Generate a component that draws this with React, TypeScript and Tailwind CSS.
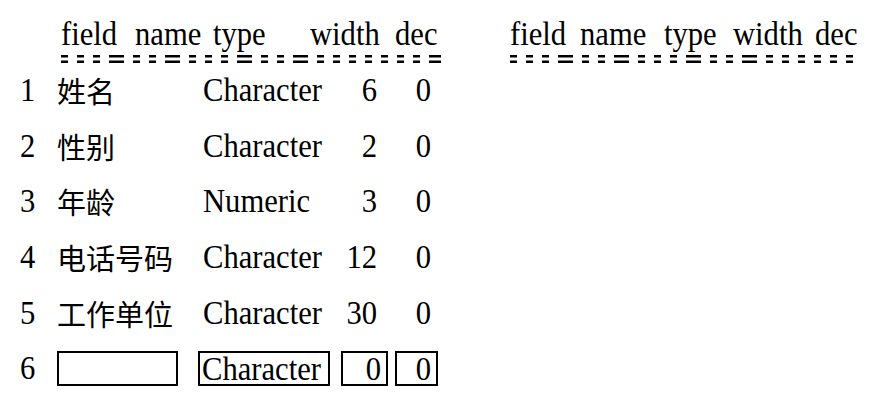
import React from "react";

const serif = { fontFamily: '"Liberation Serif", "Noto Sans CJK SC", serif' };
const cjk = { fontFamily: '"Noto Sans CJK SC", sans-serif' };

function Dashes({ width }: { width: number }) {
  const items: { x: number; w: number }[] = [];
  const pattern = [1, 1, 1, 2, 1, 1, 2, 1, 1, 1, 2, 1, 1, 2, 1, 1, 1, 1];
  let x = 0;
  let i = 0;
  while (x < width - 6) {
    const p = pattern[i % pattern.length];
    const w = p === 2 ? 15 : 7;
    items.push({ x, w: Math.min(w, width - x) });
    x += w + 9;
    i++;
  }
  return (
    <svg width={width} height={8} className="block">
      {items.map((it, k) => (
        <g key={k} fill="#000">
          <rect x={it.x} y={0} width={it.w} height={2.5} />
          <rect x={it.x} y={5.5} width={it.w} height={2.5} />
        </g>
      ))}
    </svg>
  );
}

function T({ children, right }: { children: React.ReactNode; right?: boolean }) {
  return (
    <span
      className={
        right
          ? "inline-block scale-x-[0.9] origin-right"
          : "inline-block scale-x-[0.9] origin-left"
      }
    >
      {children}
    </span>
  );
}

type Row = { n: string; name: string; type: string; w: string; d: string };
const rows: Row[] = [
  { n: "1", name: "姓名", type: "Character", w: "6", d: "0" },
  { n: "2", name: "性别", type: "Character", w: "2", d: "0" },
  { n: "3", name: "年龄", type: "Numeric", w: "3", d: "0" },
  { n: "4", name: "电话号码", type: "Character", w: "12", d: "0" },
  { n: "5", name: "工作单位", type: "Character", w: "30", d: "0" },
];

export default function App() {
  return (
    <div
      className="w-[891px] h-[413px] bg-white text-black flex overflow-hidden"
      style={serif}
    >
      {/* left table */}
      <div className="w-[508px] pt-[16px] pl-[20px]">
        <div className="flex pl-[41px] text-[34px] leading-[36px] h-[36px] whitespace-nowrap">
          <span className="w-[74px]"><T>field</T></span>
          <span className="w-[78px]"><T>name</T></span>
          <span className="w-[97px]"><T>type</T></span>
          <span className="w-[85px]"><T>width</T></span>
          <span><T>dec</T></span>
        </div>
        <div className="pl-[41px] mt-[3px] -mb-[1px]">
          <Dashes width={380} />
        </div>
        {rows.map((r) => (
          <div
            key={r.n}
            className="flex items-center h-[55.7px] text-[34px] leading-[36px] whitespace-nowrap"
          >
            <span className="w-[37px]"><T>{r.n}</T></span>
            <span className="w-[146px] text-[29px]" style={cjk}>
              {r.name}
            </span>
            <span className="w-[130px]"><T>{r.type}</T></span>
            <span className="w-[44px] text-right"><T right>{r.w}</T></span>
            <span className="w-[54px] text-right"><T right>{r.d}</T></span>
          </div>
        ))}
        <div className="flex items-center h-[55.7px] text-[34px] leading-[36px] whitespace-nowrap">
          <span className="w-[37px]"><T>6</T></span>
          <span className="w-[121px] h-[35px] border-2 border-black"></span>
          <span className="w-[20px]"></span>
          <span className="h-[35px] w-[132px] border-2 border-black flex items-center pl-[2px] leading-[31px]">
            <T>Character</T>
          </span>
          <span className="w-[11px]"></span>
          <span className="h-[35px] w-[47px] border-2 border-black flex items-center justify-end pr-[5px] leading-[31px]">
            <T right>0</T>
          </span>
          <span className="w-[7px]"></span>
          <span className="h-[35px] w-[43px] border-2 border-black flex items-center justify-end pr-[5px] leading-[31px]">
            <T right>0</T>
          </span>
        </div>
      </div>
      {/* right table */}
      <div className="pt-[16px] pl-[2px]">
        <div className="flex text-[34px] leading-[36px] h-[36px] whitespace-nowrap">
          <span className="w-[70px]"><T>field</T></span>
          <span className="w-[84px]"><T>name</T></span>
          <span className="w-[69px]"><T>type</T></span>
          <span className="w-[82px]"><T>width</T></span>
          <span><T>dec</T></span>
        </div>
        <div className="mt-[3px]">
          <Dashes width={355} />
        </div>
      </div>
    </div>
  );
}
